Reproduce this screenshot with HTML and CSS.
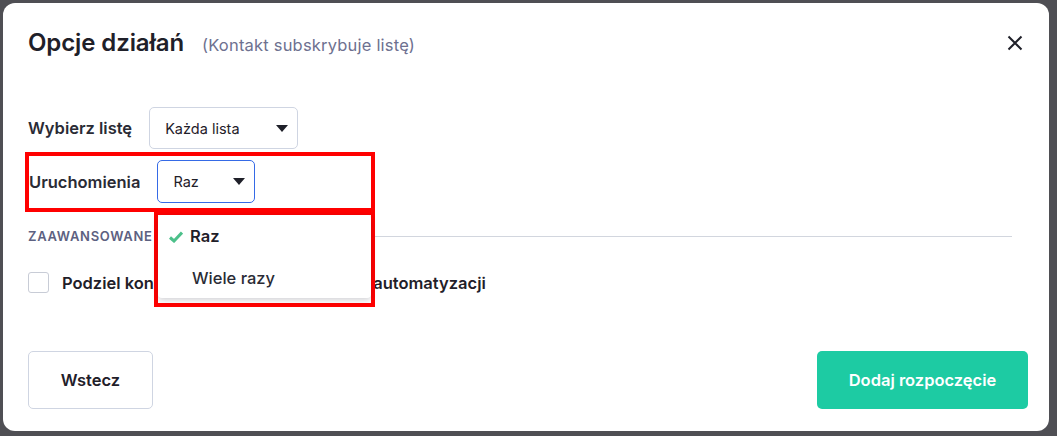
FILE: index.html
```html
<!DOCTYPE html>
<html lang="pl">
<head>
<meta charset="utf-8">
<title>Opcje działań</title>
<link rel="stylesheet" href="styles.css">
</head>
<body>
<div class="modal">
  <div class="modal-header">
    <h1 class="title">Opcje działań</h1>
    <span class="subtitle">(Kontakt subskrybuje listę)</span>
    <button class="close" aria-label="Zamknij">
      <svg width="16" height="16" viewBox="0 0 16 16"><path d="M1.5 1.5 L14.5 14.5 M14.5 1.5 L1.5 14.5" stroke="#1f2029" stroke-width="2" fill="none"/></svg>
    </button>
  </div>
  <div class="modal-body">
    <div class="field-row">
      <span class="label">Wybierz listę</span>
      <div class="select select-list"><span>Każda lista</span><span class="caret"></span></div>
    </div>
    <div class="field-row highlight">
      <span class="label">Uruchomienia</span>
      <div class="select select-runs focused"><span>Raz</span><span class="caret"></span></div>
      <div class="menu-frame">
        <ul class="menu">
          <li class="menu-item selected">
            <svg class="check" width="14" height="12" viewBox="0 0 14 12"><path d="M1 6.5 L5 10 L13 1.5" stroke="#4cc08a" stroke-width="3" fill="none" stroke-linejoin="miter"/></svg>
            Raz
          </li>
          <li class="menu-item">Wiele razy</li>
        </ul>
      </div>
    </div>
    <div class="section">
      <span class="section-title">ZAAWANSOWANE</span>
      <span class="section-line"></span>
    </div>
    <label class="check-row">
      <span class="checkbox"></span>
      <span class="check-label">Podziel kontakty, które wchodzą do tej automatyzacji</span>
    </label>
  </div>
  <div class="modal-footer">
    <button class="btn btn-secondary">Wstecz</button>
    <button class="btn btn-primary">Dodaj rozpoczęcie</button>
  </div>
</div>
</body>
</html>
```
FILE: styles.css
```css
* { box-sizing: border-box; }
html, body { margin: 0; padding: 0; }
body {
  background: #4f4f54;
  width: 1057px;
  height: 436px;
  overflow: hidden;
  font-family: "Inter", "Noto Sans", sans-serif;
  color: #1f2029;
}
.modal {
  margin: 3px 0 0 3px;
  width: 1046px;
  height: 428px;
  background: #fff;
  border-radius: 12px;
  padding: 0 21px 22px 25px;
  display: flex;
  flex-direction: column;
}
.modal-header {
  display: flex;
  align-items: center;
  height: 32px;
  margin-top: 24px;
}
.title {
  margin: 0;
  font-size: 24px;
  font-weight: 600;
  line-height: 32px;
  color: #1f2029;
  letter-spacing: -0.1px;
}
.subtitle {
  margin-left: 18px;
  font-size: 16.5px;
  letter-spacing: 0.2px;
  color: #6e7190;
  padding-top: 3px;
}
.close {
  margin-left: auto;
  margin-right: 5px;
  border: 0;
  background: none;
  padding: 0;
  width: 16px;
  height: 16px;
  display: flex;
}
.modal-body {
  margin-top: 48px;
  flex: 1;
}
.field-row {
  display: flex;
  align-items: center;
}
.label {
  font-size: 16.5px;
  font-weight: 600;
  color: #2a2b35;
  margin-right: 17px;
}
.select {
  display: flex;
  align-items: center;
  justify-content: space-between;
  height: 42px;
  border: 1px solid #cfd5e2;
  border-radius: 5px;
  font-size: 14.5px;
  color: #1f2029;
  padding: 0 9px 0 15px;
}
.select-list { width: 149px; }
.select-runs { width: 98px; height: 43px; }
.focused { border-color: #356ae6; }
.caret {
  width: 0;
  height: 0;
  border-left: 6.5px solid transparent;
  border-right: 6.5px solid transparent;
  border-top: 7px solid #1f2029;
}
.highlight {
  position: relative;
  margin: 3px 0 0 -3px;
  width: 350px;
  height: 60px;
  border: 4px solid #ff0000;
  padding: 0 0 1px 0;
}
.menu-frame {
  position: absolute;
  left: 125px;
  top: 55px;
  width: 221px;
  height: 96px;
  border: 4px solid #ff0000;
  z-index: 2;
}
.menu {
  list-style: none;
  margin: 0;
  padding: 0;
  width: 213px;
  height: 83px;
  background: #fff;
  border-radius: 4px;
  box-shadow: 0 2px 6px rgba(20, 20, 40, 0.2);
}
.menu-item {
  position: relative;
  height: 42px;
  display: flex;
  align-items: center;
  padding-left: 34px;
  font-size: 16.5px;
  font-weight: 500;
  color: #2a2b35;
}
.menu-item.selected {
  font-weight: 600;
  padding-left: 32px;
  color: #1f2029;
}
.check {
  position: absolute;
  left: 11px;
  top: 16px;
}
.section {
  display: flex;
  align-items: center;
  margin-top: 14px;
  height: 20px;
}
.section-title {
  font-size: 13px;
  font-weight: 600;
  letter-spacing: 0.7px;
  color: #5d6181;
}
.section-line {
  flex: 1;
  height: 1px;
  background: #d2d6de;
  margin-left: 10px;
  margin-right: 16px;
}
.check-row {
  display: flex;
  align-items: center;
  margin-top: 26px;
  height: 21px;
}
.checkbox {
  width: 21px;
  height: 21px;
  border: 1px solid #c8ccd6;
  border-radius: 3px;
  margin-right: 13px;
}
.check-label {
  font-size: 16.5px;
  font-weight: 600;
  color: #1f2029;
}
.modal-footer {
  display: flex;
  justify-content: space-between;
}
.btn {
  height: 58px;
  border-radius: 5px;
  font-family: inherit;
  font-size: 16.5px;
  font-weight: 600;
  cursor: pointer;
}
.btn-secondary {
  width: 125px;
  background: #fff;
  border: 1px solid #cfd5e2;
  color: #1f2029;
}
.btn-primary {
  width: 211px;
  background: #1dcba3;
  border: 0;
  color: #fff;
}
```
